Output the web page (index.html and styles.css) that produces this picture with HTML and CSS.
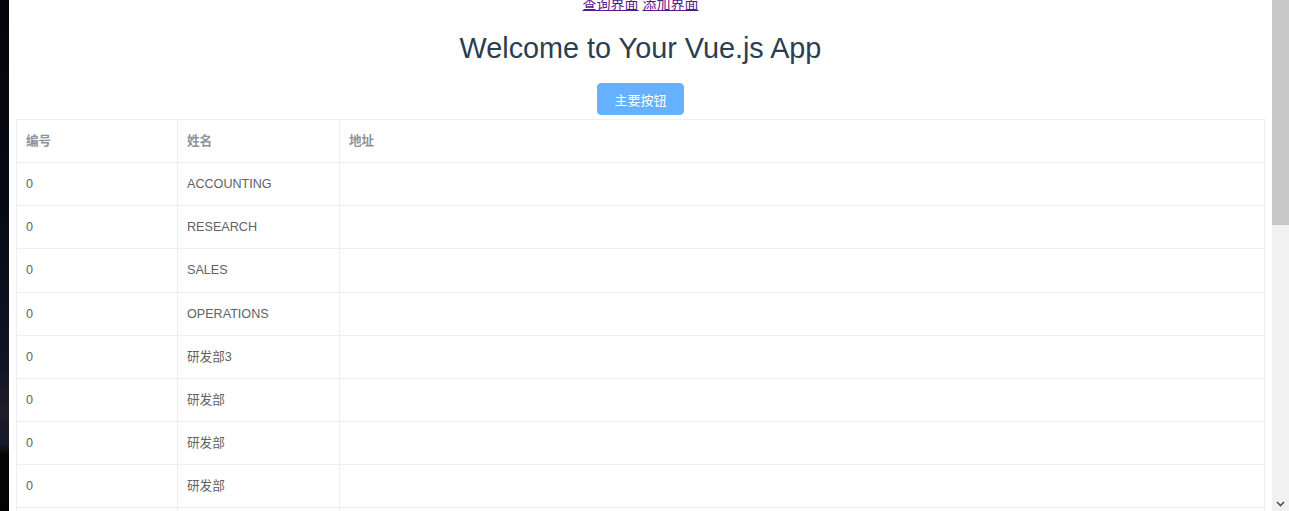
FILE: index.html
```html
<!DOCTYPE html>
<html lang="en">

<head>
    <meta charset="UTF-8" />
    <meta name="viewport" content="width=device-width, initial-scale=1.0" />
    <title>Vue App</title>
    <link rel="stylesheet" href="styles.css">
</head>

<body>
    <div class="backdrop"></div>
    <div class="page">
        <div class="nav">
            <a href="#query" class="visited">查询界面</a>
            <a href="#add" class="visited">添加界面</a>
        </div>
        <h1 class="title">Welcome to Your Vue.js App</h1>
        <div class="actions">
            <button type="button" class="btn-primary">主要按钮</button>
        </div>
        <table class="data-table">
            <colgroup>
                <col class="col-id" />
                <col class="col-name" />
                <col />
            </colgroup>
            <thead>
                <tr>
                    <th>编号</th>
                    <th>姓名</th>
                    <th>地址</th>
                </tr>
            </thead>
            <tbody>
                <tr><td>0</td><td>ACCOUNTING</td><td></td></tr>
                <tr><td>0</td><td>RESEARCH</td><td></td></tr>
                <tr><td>0</td><td>SALES</td><td></td></tr>
                <tr><td>0</td><td>OPERATIONS</td><td></td></tr>
                <tr><td>0</td><td>研发部3</td><td></td></tr>
                <tr><td>0</td><td>研发部</td><td></td></tr>
                <tr><td>0</td><td>研发部</td><td></td></tr>
                <tr><td>0</td><td>研发部</td><td></td></tr>
                <tr><td>0</td><td>研发部</td><td></td></tr>
            </tbody>
        </table>
    </div>
    <div class="scrollbar">
        <div class="scroll-thumb"></div>
        <div class="scroll-down">
            <svg width="9" height="6" viewBox="0 0 9 6">
                <path d="M1 1 L4.5 4.5 L8 1" fill="none" stroke="#505050" stroke-width="1.6" />
            </svg>
        </div>
    </div>
</body>

</html>
```

FILE: styles.css
```css
body {
    margin: 0;
    height: 511px;
    display: flex;
    overflow: hidden;
    background-color: #fff;
    font-family: "Liberation Sans", Arial, "Noto Sans CJK SC", sans-serif;
}

.backdrop {
    width: 9px;
    flex-shrink: 0;
    background: linear-gradient(180deg, #040409 0%, #070a14 40%, #0e1424 70%, #1f1c28 80%, #161a28 87%, #050506 89%, #030303 100%);
}

.page {
    flex: 1;
    padding: 0 7px;
    overflow: hidden;
    text-align: center;
    color: #2c3e50;
}

.nav {
    margin-top: -4px;
    font-size: 14px;
    line-height: 16px;
}

.nav a {
    color: #551a8b;
}

.title {
    margin: 20px 0 19px;
    font-size: 28.8px;
    font-weight: normal;
    line-height: 32px;
}

.actions {
    margin-bottom: 4px;
}

.btn-primary {
    width: 87px;
    height: 32px;
    padding: 0;
    font-family: inherit;
    font-size: 13px;
    color: #fff;
    background-color: #66b1ff;
    border: 1px solid #66b1ff;
    border-radius: 4px;
    cursor: pointer;
}

.data-table {
    width: 100%;
    table-layout: fixed;
    border-collapse: separate;
    border-spacing: 0;
    border-top: 1px solid #ebeef5;
    border-left: 1px solid #ebeef5;
    text-align: left;
    font-size: 12.6px;
    color: #606266;
}

.col-id {
    width: 161px;
}

.col-name {
    width: 162px;
}

.data-table th,
.data-table td {
    padding: 10px 9px;
    line-height: 22.15px;
    border-right: 1px solid #ebeef5;
    border-bottom: 1px solid #ebeef5;
    white-space: nowrap;
    overflow: hidden;
}

.data-table th {
    color: #909399;
    font-weight: bold;
}

.scrollbar {
    width: 17px;
    flex-shrink: 0;
    display: flex;
    flex-direction: column;
    background-color: #f1f1f1;
}

.scroll-thumb {
    height: 225px;
    background-color: #c8c8c8;
}

.scroll-down {
    margin-top: auto;
    height: 10px;
    display: flex;
    justify-content: center;
    align-items: flex-start;
}
```
